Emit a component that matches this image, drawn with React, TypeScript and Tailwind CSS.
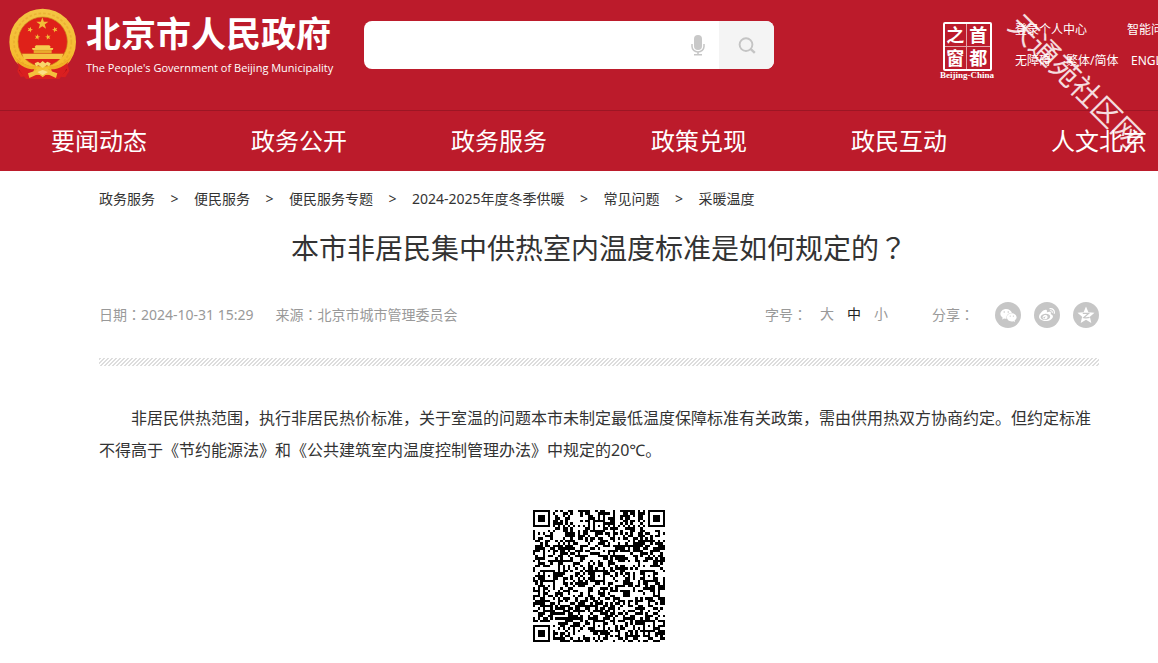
import { FaWeibo, FaWeixin } from 'react-icons/fa';

const navItems = ['要闻动态', '政务公开', '政务服务', '政策兑现', '政民互动', '人文北京'];

const crumbs = ['政务服务', '便民服务', '便民服务专题', '2024-2025年度冬季供暖', '常见问题', '采暖温度'];

const QR_SIZE = 53;

// finder squares sit in three corners, smaller alignment squares on a 20 module grid
function qrModule(x: number, y: number) {
  const last = QR_SIZE - 1;
  const corners = [[3, 3], [last - 3, 3], [3, last - 3]];
  for (const [cx, cy] of corners) {
    const d = Math.max(Math.abs(x - cx), Math.abs(y - cy));
    if (d <= 4) return d !== 2 && d !== 4;
  }
  const aligns = [[26, 6], [6, 26], [26, 26], [46, 26], [26, 46], [46, 46]];
  for (const [cx, cy] of aligns) {
    const d = Math.max(Math.abs(x - cx), Math.abs(y - cy));
    if (d <= 2) return d !== 1;
  }
  if (x === 6) return y % 2 === 0;
  if (y === 6) return x % 2 === 0;
  let h = Math.imul(x + 11, 374761393) ^ Math.imul(y + 7, 668265263);
  h = Math.imul(h ^ (h >>> 13), 1274126177);
  return ((h ^ (h >>> 16)) & 1) === 1;
}

function QrCode() {
  let d = '';
  for (let y = 0; y < QR_SIZE; y++) {
    for (let x = 0; x < QR_SIZE; x++) {
      if (qrModule(x, y)) d += `M${x} ${y}h1v1h-1z`;
    }
  }
  return (
    <svg viewBox="0 0 53 53" className="w-[132px] h-[132px]" shapeRendering="crispEdges" role="img" aria-label="二维码">
      <path d={d} fill="#000" />
    </svg>
  );
}

const STAR = 'M0 -10 2.4 -3.2 9.5 -3.1 3.8 1.2 5.9 8.1 0 4 -5.9 8.1 -3.8 1.2 -9.5 -3.1 -2.4 -3.2Z';

function Emblem() {
  return (
    <svg viewBox="24 24 210 216" className="w-[70px] h-[72px] shrink-0" aria-hidden="true">
      <defs>
        <linearGradient id="gold" x1="0" y1="0" x2="0" y2="1">
          <stop offset="0" stopColor="#f3c544" />
          <stop offset="1" stopColor="#f7b928" />
        </linearGradient>
      </defs>
      {/* red drapes */}
      <path d="M50 172 62 182 104 192H152L194 182 206 170 202 192 208 212 196 232 180 230 170 237H88L76 229 62 231 52 213 58 196Z" fill="#d91f20" />
      <path d="M66 190 80 228M190 190 176 228M58 210 70 222M200 208 186 222" stroke="#a90f18" strokeWidth="4" />
      {/* wreath */}
      <circle cx="128" cy="126" r="100" fill="url(#gold)" />
      <circle cx="128" cy="126" r="86" fill="none" stroke="#df9e26" strokeWidth="5" strokeDasharray="8 6" opacity=".45" />
      <circle cx="128" cy="125" r="74" fill="#df2119" stroke="#c9821c" strokeWidth="2" />
      <path d="M50 178C70 196 92 200 104 202L94 237H78L60 214Z M206 178C186 196 164 200 152 202L162 237H178L196 214Z" fill="#d91f20" />
      <path d="M40 164C56 188 84 200 110 198L104 208C76 208 48 192 40 164Z M216 164C200 188 172 200 146 198L152 208C180 208 208 192 216 164Z" fill="#f0ae25" />
      <g fill="#f1bd38">
        <path d={STAR} transform="translate(127 71) scale(1.9)" />
        <path d={STAR} transform="translate(90 89) scale(.9) rotate(20)" />
        <path d={STAR} transform="translate(165 89) scale(.9) rotate(-20)" />
        <path d={STAR} transform="translate(112 111) scale(.9) rotate(12)" />
        <path d={STAR} transform="translate(144 111) scale(.9) rotate(-12)" />
      </g>
      {/* gate tower */}
      <path d="M104 140 108 136H148L152 140 150 144H160L158 150H98L96 144H106Z" fill="#f6cb4e" />
      <path d="M101 150H155V160H101Z" fill="#eaaa2c" />
      <path d="M66 161H190L184 177H72Z" fill="#f5c343" />
      <path d="M64 160H192M100 151H156" stroke="#c97e18" strokeWidth="1" />
      {/* cog and ribbon */}
      <path d="M104 190 114 185 120 190 128 183 136 190 142 185 152 190 148 199 140 196 128 204 116 196 108 199Z" fill="#f8d66b" />
      <path d="M84 220 106 212 118 204 128 210 138 204 150 212 172 220 168 234 150 226 140 222 128 232 116 222 106 226 88 234Z" fill="#f4bf3d" />
      <path d="M112 216 128 210 144 216 128 226Z" fill="#fbe083" />
    </svg>
  );
}

function MicIcon() {
  return (
    <svg viewBox="0 0 14 21" className="w-[14px] h-[21px]" fill="none" stroke="#c6c6c6" aria-hidden="true">
      <rect x="3" y="0" width="8" height="15" rx="4" fill="#c8c8c8" stroke="none" />
      <path d="M1 9v2.5a6 5.5 0 0 0 12 0V9" strokeWidth="1.5" />
      <path d="M7 17v3M3 19.8h8" strokeWidth="1.5" />
    </svg>
  );
}

function SearchIcon() {
  return (
    <svg viewBox="0 0 18 17" className="w-[18px] h-[17px]" fill="none" stroke="#c4c4c4" strokeWidth="1.9" aria-hidden="true">
      <circle cx="8" cy="7.6" r="6.4" />
      <path d="M12.8 12.2 16.8 15.8" strokeWidth="2.4" />
    </svg>
  );
}

function QzoneIcon() {
  return (
    <svg viewBox="0 0 18 18" className="w-[18px] h-[18px]" aria-hidden="true">
      <path d="M9 .5 11.4 6.3 17.5 6.8 12.9 10.8 14.3 17 9 13.7 3.7 17 5.1 10.8.5 6.8 6.6 6.3Z" fill="#fff" />
      <path d="M5.8 7.4H11.6L6.8 11.6Q10 12.2 12.6 11.4" fill="none" stroke="#c6c6c6" strokeWidth="1.3" />
    </svg>
  );
}

// full-width colon, centred in its cell
function Colon() {
  return <span className="font-['Noto_Sans_CJK_TC',sans-serif]">：</span>;
}

function Header() {
  return (
    <header className="bg-[#bc1b2b] text-white">
      <div className="h-[110px] flex items-start pl-2">
        <a href="#" className="flex pt-2">
          <Emblem />
          <span className="ml-2 block w-[246px] whitespace-nowrap">
            <span className="block text-[35px] leading-[52px] font-bold">北京市人民政府</span>
            <span className="block font-['Open_Sans',sans-serif] text-[11px] leading-4">The People's Government of Beijing Municipality</span>
          </span>
        </a>

        <form className="ml-8 mt-[21px] flex h-12 w-[410px] shrink-0 overflow-hidden rounded-lg bg-white">
          <input type="text" aria-label="搜索" className="min-w-0 flex-1 px-4 text-base text-[#333] outline-none" />
          <button type="button" aria-label="语音输入" className="w-[42px] flex items-center justify-center">
            <MicIcon />
          </button>
          <button type="button" aria-label="搜索" className="w-[55px] bg-[#f4f4f4] flex items-center justify-center">
            <SearchIcon />
          </button>
        </form>

        <div className="ml-auto mt-[22px] flex">
          <a href="#" className="w-14 flex flex-col items-center">
            <span className="grid grid-cols-2 w-[49px] h-[49px] rounded-xs border-2 border-white text-[18px] leading-[22px] font-bold text-center">
              <span className="border-r border-b border-white/60">之</span>
              <span className="border-b border-white/60">首</span>
              <span className="border-r border-white/60">窗</span>
              <span>都</span>
            </span>
            <span className="font-['Liberation_Serif',serif] text-[9px] leading-[9px] font-bold whitespace-nowrap">Beijing-China</span>
          </a>
          <div className="ml-5 w-[183px] text-[12px] leading-4 whitespace-nowrap">
            <div className="flex">
              <a href="#" className="w-28">登录个人中心</a>
              <a href="#">智能问答</a>
            </div>
            <div className="mt-[15px] flex">
              <a href="#" className="w-[51px]">无障碍</a>
              <a href="#" className="w-[65px]">繁体/简体</a>
              <a href="#">ENGLISH</a>
            </div>
          </div>
        </div>
      </div>

      <nav className="border-t border-[#9c1624]">
        <ul className="mx-auto flex justify-center">
          {navItems.map((item) => (
            <li key={item} className="w-[200px] shrink-0 text-center">
              <a href="#" className="block text-2xl leading-[60px]">{item}</a>
            </li>
          ))}
        </ul>
      </nav>
    </header>
  );
}

function ArticleMeta() {
  return (
    <div className="mt-8 flex items-center text-sm text-[#999]">
      <span>日期<Colon />2024-10-31 15:29</span>
      <span className="ml-[22px]">来源<Colon />北京市城市管理委员会</span>

      <div className="ml-auto flex items-center gap-[13px]">
        <span>字号<Colon /></span>
        <button type="button">大</button>
        <button type="button" className="text-[#222]">中</button>
        <button type="button">小</button>
      </div>
      <div className="ml-11 flex items-center">
        <span>分享<Colon /></span>
        <div className="ml-[21px] flex gap-[13px] pt-0.5">
          <a href="#" aria-label="微信" className="size-[26px] rounded-full bg-[#c6c6c6] text-white flex items-center justify-center">
            <FaWeixin size={17} />
          </a>
          <a href="#" aria-label="微博" className="size-[26px] rounded-full bg-[#c6c6c6] text-white flex items-center justify-center">
            <FaWeibo size={16} />
          </a>
          <a href="#" aria-label="QQ空间" className="size-[26px] rounded-full bg-[#c6c6c6] flex items-center justify-center">
            <QzoneIcon />
          </a>
        </div>
      </div>
    </div>
  );
}

export default function App() {
  return (
    <div className="overflow-hidden bg-white font-['Noto_Sans','Noto_Sans_CJK_SC',sans-serif]">
      <div className="relative min-w-[1198px]">
        <Header />

        <main className="mx-auto w-[1000px] pt-[18px] pb-5 text-[#333]">
          <ol className="flex text-sm">
            {crumbs.map((crumb, i) => (
              <li key={crumb} className="flex">
                {i > 0 && <span className="w-[39px] text-center">&gt;</span>}
                <a href="#">{crumb}</a>
              </li>
            ))}
          </ol>

          <h1 className="mt-[18px] text-center text-[28px] leading-10">
            本市非居民集中供热室内温度标准是如何规定的<span className="font-['Noto_Sans_CJK_TC',sans-serif]">？</span>
          </h1>

          <ArticleMeta />

          <div className="mt-[30px] h-2 bg-[linear-gradient(135deg,#ddd_25%,transparent_25%_50%,#ddd_50%_75%,transparent_75%)] bg-size-[4px_4px]" />

          <p className="mt-9 indent-8 text-base leading-8">
            非居民供热范围，执行非居民热价标准，关于室温的问题本市未制定最低温度保障标准有关政策，需由供用热双方协商约定。但约定标准不得高于《节约能源法》和《公共建筑室内温度控制管理办法》中规定的20℃。
          </p>

          <div className="mt-11 flex justify-center">
            <QrCode />
          </div>
        </main>

        {/* Watermark */}
        <div className="pointer-events-none absolute left-[989px] top-[61px] w-[174px] rotate-45 text-[29px] leading-10 whitespace-nowrap text-white/85">
          天通苑社区网
        </div>
      </div>
    </div>
  );
}
